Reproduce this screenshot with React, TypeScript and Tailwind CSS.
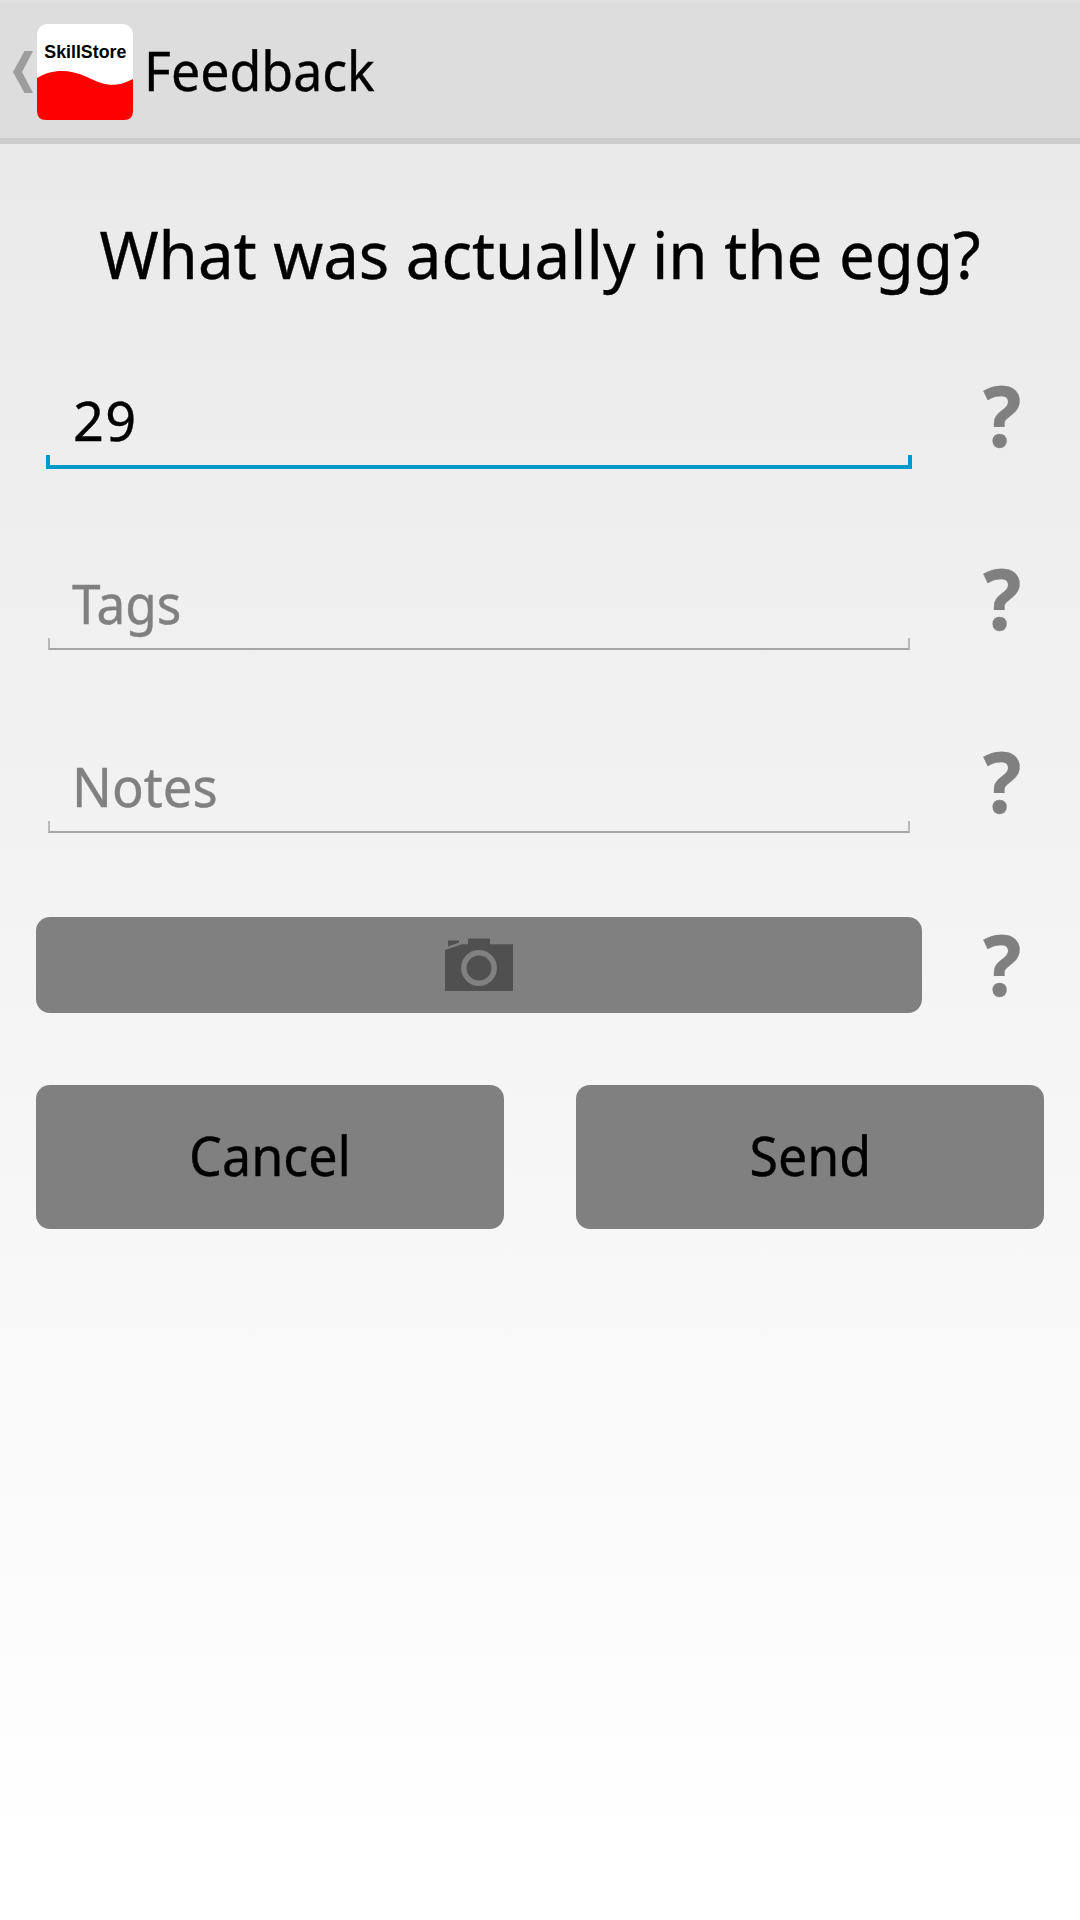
import React from "react";

function Help() {
  return (
    <div className="flex h-[96px] w-[158px] items-center justify-center pb-[3px] pl-[3px] font-['Open_Sans','Noto_Sans',sans-serif] text-[85px] font-bold leading-none text-[#808080]">
      <span className="inline-block scale-x-[0.94]">?</span>
    </div>
  );
}

function Field({ text, fit, active = false }: { text: string; fit: string; active?: boolean }) {
  return (
    <div className="flex h-[183px] items-center">
      <div className="flex h-[96px] w-[922px] flex-col pl-[46px]">
        <div
          className={
            active
              ? "h-[88px] pl-[27px] pt-[15px] text-[54px] leading-[74px] text-black"
              : "h-[88px] pl-[26px] pt-[15px] text-[54px] leading-[74px] text-[#808080]"
          }
        >
          <span className={fit}>{text}</span>
        </div>
        {active ? (
          <div className="-mt-px h-[14px] w-[866px] shrink-0 border-4 border-t-0 border-[#0099cc]" />
        ) : (
          <div className="ml-[2px] h-[12px] w-[862px] shrink-0 -mt-px border-2 border-t-0 border-x-[#bababa] border-b-[#a6a6a6]" />
        )}
      </div>
      <Help />
    </div>
  );
}

function CameraIcon() {
  return (
    <svg width="68" height="54" viewBox="0 0 68 54" fill="#505050">
      <path d="M3 2.500H14V4.500L3 8.500Z" />
      <path d="M0 12 17 6.200H23V0.500H45V6.200H68V53H0Z" />
      <circle cx="34" cy="30" r="15.200" fill="none" stroke="#808080" strokeWidth="5.400" />
    </svg>
  );
}

function AppIcon() {
  return (
    <svg width="96" height="96" viewBox="0 0 96 96">
      <rect width="96" height="96" rx="10" fill="#fff" />
      <path d="M0 54C14 46 30 44 50 53C68 62 79 64 96 55V87Q96 96 87 96H9Q0 96 0 87Z" fill="#f00" />
      <text x="7.300" y="33.500" textLength="82" fontFamily="Liberation Sans, sans-serif" fontWeight="bold" fontSize="17.800">
        SkillStore
      </text>
    </svg>
  );
}

export default function App() {
  return (
    <div className="flex h-[1920px] w-[1080px] flex-col bg-[linear-gradient(to_bottom,#e8e8e8_0px,#ffffff_1860px)] font-['Noto_Sans',sans-serif] text-black [-webkit-text-stroke:0.4px_currentColor]">
      <header className="flex h-[144px] items-center border-t-[3px] border-b-[6px] border-t-[#e0e0e0] border-b-[#cccccc] bg-[#dddddd] pt-[2px] [&>svg]:[-webkit-text-stroke:0]">
        <svg className="ml-[13px] mr-[4px]" width="20" height="42" viewBox="0 0 20 42">
          <path d="M11.500 0H20L9 21 20 42H11.500L0 21Z" fill="#9c9c9c" />
        </svg>
        <AppIcon />
        <h1 className="-mt-[4px] ml-[11px] origin-left scale-x-[0.96] text-[54px] leading-[74px]">Feedback</h1>
      </header>
      <h2 className="flex h-[180px] items-center justify-center pt-[38px] text-[66px] leading-[90px]">
        <span className="inline-block scale-x-[0.964] whitespace-nowrap">What was actually in the egg?</span>
      </h2>
      <Field text="29" fit="tracking-[1.4px]" active />
      <Field text="Tags" fit="inline-block origin-left scale-x-[0.95]" />
      <Field text="Notes" fit="inline-block origin-left scale-x-[0.974]" />
      <div className="flex h-[183px] items-center pl-9">
        <button className="flex h-[96px] w-[886px] items-center justify-center rounded-[14px] bg-[#808080]">
          <CameraIcon />
        </button>
        <Help />
      </div>
      <div className="mt-[29px] flex gap-[72px] px-9 text-[54px]">
        <button className="h-[144px] flex-1 rounded-[14px] bg-[#808080] pb-[4px]">
          <span className="inline-block scale-x-[0.963]">Cancel</span>
        </button>
        <button className="h-[144px] flex-1 rounded-[14px] bg-[#808080] pb-[4px]">
          <span className="inline-block scale-x-[0.96]">Send</span>
        </button>
      </div>
    </div>
  );
}
